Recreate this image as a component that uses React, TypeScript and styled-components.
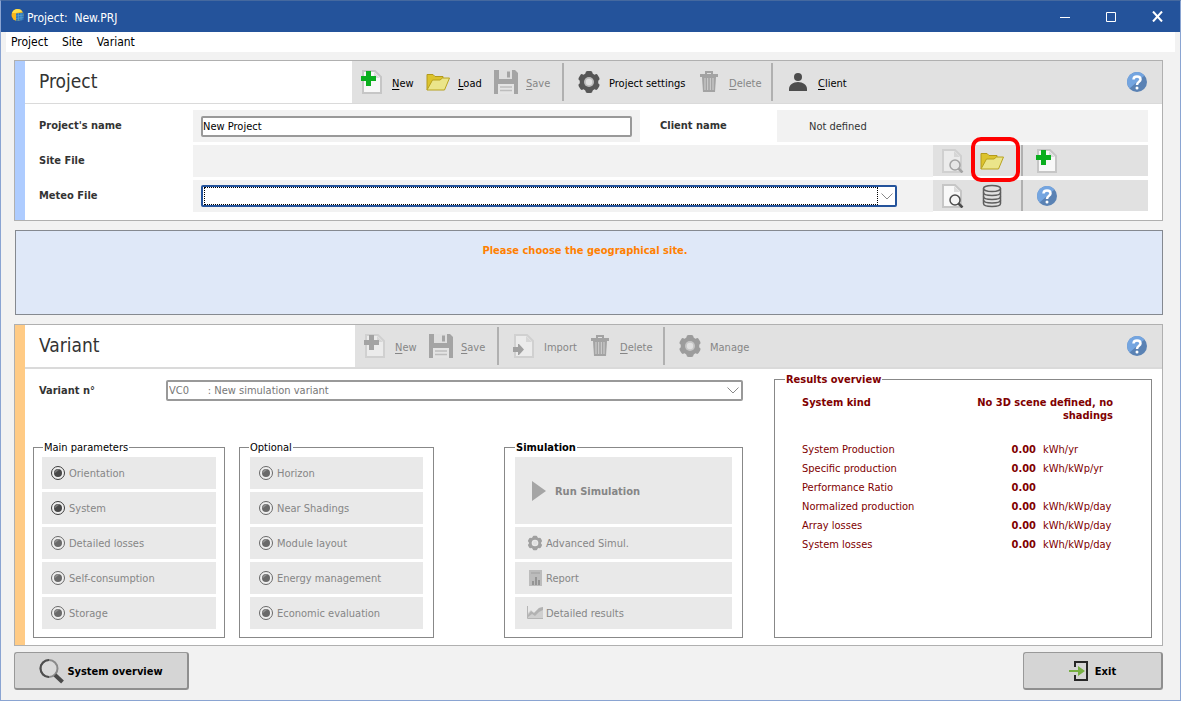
import React from "react";
import styled, { createGlobalStyle, css } from "styled-components";

const FONT = `"DejaVu Sans Condensed", "DejaVu Sans", sans-serif`;

const c = {
  blue: "#24539b",
  body: "#f2f2f2",
  bar: "#e1e1e1",
  line: "#b0b0b0",
  field: "#999999",
  text: "#333333",
  disabled: "#868686",
  maroon: "#800000",
};

const GlobalStyle = createGlobalStyle`
  *, *::before, *::after { box-sizing: border-box; }
  body { margin: 0; font-family: ${FONT}; font-size: 11px; line-height: 14px; color: ${c.text}; }
  button, input, select { font: inherit; color: inherit; margin: 0; }
  button { border: 0; background: none; padding: 0; text-align: left; white-space: nowrap; }
  svg { display: block; flex: none; }
`;

/* ---------- window ---------- */

const Window = styled.div`
  display: flex;
  flex-direction: column;
  min-height: 100vh;
  background: ${c.body};
  border: 1px solid #8aa4d2;
  border-top-color: #45699f;
`;

const TitleBar = styled.header`
  display: flex;
  align-items: center;
  height: 31px;
  padding-left: 9px;
  background: ${c.blue};
  color: #ffffff;
`;

const WindowTitle = styled.h1`
  flex: 1;
  margin: 0 0 0 2px;
  padding-top: 2px;
  font-size: 12px;
  font-weight: 400;
  white-space: pre;
`;

const CaptionButton = styled.button`
  display: flex;
  align-items: center;
  justify-content: center;
  width: 46px;
  height: 31px;
`;

const MenuBar = styled.nav`
  display: flex;
  align-items: center;
  gap: 14px;
  height: 20px;
  margin: 0 5px;
  padding-left: 5px;
  background: #ffffff;
  color: #000000;
  font-size: 12px;
`;

const Main = styled.main`
  display: flex;
  flex-direction: column;
  flex: 1;
  gap: 9px;
  padding: 8px 17px 6px 13px;
`;

/* ---------- panels ---------- */

const Panel = styled.section<{ $stripe: string }>`
  border: 1px solid ${c.line};
  background: linear-gradient(to right, ${(p) => p.$stripe} 10px, #ffffff 10px);
  padding-left: 10px;
`;

const PanelHead = styled.div<{ $rule: number }>`
  display: flex;
  height: ${(p) => 42 + p.$rule}px;
  border-bottom: ${(p) => p.$rule}px solid #dadada;
`;

const PanelTitle = styled.h2<{ $width: number }>`
  flex: none;
  width: ${(p) => p.$width}px;
  margin: 0;
  padding-left: 14px;
  font-size: 19px;
  font-weight: 400;
  line-height: 41px;
`;

const Toolbar = styled.div`
  display: flex;
  flex: 1;
  padding: 2px 15px 2px 8px;
  background: ${c.bar};
`;

const ToolButton = styled.button<{ $width?: number }>`
  display: flex;
  align-items: center;
  gap: 8px;
  width: ${(p) => (p.$width ? `${p.$width}px` : "auto")};
  color: #000000;
  &:disabled { color: ${c.disabled}; }
`;

const ToolLabel = styled.span`
  padding-top: 3px;
`;

const Separator = styled.span`
  flex: none;
  width: 2px;
  margin-right: 13px;
  background: ${c.line};
`;

const HelpButton = styled.button`
  display: flex;
  align-items: center;
  margin-left: auto;
`;

const Key = styled.span`
  text-decoration: underline;
  text-underline-offset: 2px;
`;

/* ---------- project form ---------- */

const Rows = styled.div`
  display: flex;
  flex-direction: column;
  gap: 3px;
  padding: 6px 14px 8px 14px;
`;

const Row = styled.div`
  display: flex;
  height: 32px;
`;

const FieldLabel = styled.label<{ $width: number }>`
  flex: none;
  width: ${(p) => p.$width}px;
  font-weight: 700;
  line-height: 32px;
`;

const Cell = styled.div<{ $grow: number }>`
  display: flex;
  align-items: center;
  flex: ${(p) => p.$grow} 1 ${(p) => p.$grow}px;
  min-width: 0;
  padding: 0 8px;
  background: ${c.body};
`;

const ClientLabel = styled(FieldLabel)`
  margin-left: 20px;
`;

const ClientValue = styled.output`
  padding: 2px 0 0 24px;
`;

const TextInput = styled.input`
  flex: 1;
  min-width: 0;
  height: 21px;
  padding: 0;
  border: 2px solid ${c.field};
  border-radius: 2px;
  background: #ffffff;
  color: #000000;
`;

const SelectFrame = styled.div<{ $focused?: boolean }>`
  display: flex;
  align-items: center;
  flex: 1;
  min-width: 0;
  height: ${(p) => (p.$focused ? 22 : 21)}px;
  border: 2px solid ${(p) => (p.$focused ? c.blue : c.field)};
  border-radius: 2px;
  background: #ffffff;
  padding-right: 2px;
`;

const Select = styled.select<{ $focused?: boolean }>`
  appearance: none;
  flex: 1;
  min-width: 0;
  height: 18px;
  margin-right: 3px;
  padding: 0 1px;
  border: 0;
  border-radius: 0;
  background: transparent;
  outline: none;
  white-space: pre;
  &:disabled { color: #777777; opacity: 1; }
  ${(p) => p.$focused && css`border: 1px dotted #000000; margin-left: 1px;`}
`;

const SelectCell = styled(Cell)`
  padding-right: 36px;
`;

const RowTools = styled.div`
  display: flex;
  align-items: center;
  flex: none;
  width: 215px;
  height: 31px;
  padding-left: 7px;
  background: ${c.bar};
`;

const IconButton = styled.button`
  position: relative;
  display: flex;
  align-items: center;
  justify-content: center;
  width: 24px;
  height: 31px;
  margin-right: 16px;
`;

const RowSeparator = styled.span`
  width: 2px;
  height: 31px;
  margin: 0 12px 0 1px;
  background: ${c.line};
`;

const Highlight = styled.span`
  position: absolute;
  z-index: 1;
  inset: -8px -16px -6px -9px;
  border: 4px solid #ff0000;
  border-radius: 10px;
`;

const Message = styled.p`
  height: 85px;
  margin: 0 0 0 1px;
  padding: 13px 8px 0 0;
  border: 1px solid #858990;
  background: #dfe8f8;
  color: #ff8000;
  font-weight: 700;
  text-align: center;
`;

/* ---------- variant ---------- */

const VariantBody = styled.div`
  display: flex;
  gap: 31px;
  padding: 3px 10px 7px 8px;
`;

const VariantLeft = styled.div`
  display: flex;
  flex-direction: column;
  flex: 710 1 710px;
  min-width: 0;
  gap: 39px;
  padding-top: 8px;
`;

const VariantRow = styled.div`
  display: flex;
  align-items: center;
  height: 21px;
  padding-left: 6px;
`;

const Groups = styled.div`
  display: flex;
  gap: 14px;
`;

const Group = styled.fieldset<{ $grow: number; $space?: number; $strong?: boolean; $color?: string }>`
  flex: ${(p) => p.$grow} 1 ${(p) => p.$grow}px;
  min-width: 0;
  margin: 0 0 0 ${(p) => p.$space ?? 0}px;
  padding: 0;
  border: 1px solid #888888;
  color: ${(p) => p.$color ?? "#000000"};
  legend {
    margin-left: ${(p) => (p.$strong ? 10 : 9)}px;
    padding: 2px 1px 0;
    line-height: 12px;
    font-weight: ${(p) => (p.$strong ? 700 : 400)};
  }
`;

const Stack = styled.div<{ $pad: number }>`
  display: flex;
  flex-direction: column;
  gap: 3px;
  padding: 3px ${(p) => p.$pad}px 8px;
`;

const StepButton = styled.button<{ $indent?: number; $large?: boolean }>`
  display: flex;
  align-items: center;
  gap: ${(p) => (p.$large ? 8 : 3)}px;
  height: ${(p) => (p.$large ? 67 : 32)}px;
  padding-left: ${(p) => p.$indent ?? 8}px;
  background: #e9e9e9;
  font-weight: ${(p) => (p.$large ? 700 : 400)};
  &:disabled { color: ${c.disabled}; }
`;

const ButtonText = styled.span`
  padding-top: 2px;
`;

const Results = styled.div`
  padding: 10px 0 0 27px;
`;

const KindRow = styled.div`
  display: flex;
  justify-content: space-between;
  height: 44px;
  padding-right: 38px;
  font-weight: 700;
  line-height: 13px;
`;

const KindValue = styled.span`
  width: 145px;
  text-align: right;
`;

const ResultTable = styled.table`
  width: 100%;
  border-collapse: collapse;
  th, td { height: 19px; padding: 0; text-align: left; font-weight: 400; }
  td:nth-child(2) { width: 60px; text-align: right; font-weight: 700; }
  td:nth-child(3) { width: 115px; padding-left: 7px; }
`;

/* ---------- footer ---------- */

const Footer = styled.footer`
  display: flex;
  justify-content: space-between;
  padding: 0 17px 10px 13px;
`;

const PushButton = styled.button<{ $width: number; $gap: number }>`
  display: flex;
  align-items: center;
  justify-content: center;
  gap: ${(p) => p.$gap}px;
  width: ${(p) => p.$width}px;
  height: 38px;
  border: 1px solid #999999;
  border-right: 2px solid #8f8f8f;
  border-bottom: 2px solid #8f8f8f;
  border-radius: 3px;
  background: #d5d5d5;
  color: #000000;
  font-weight: 700;
`;

/* ---------- icons ---------- */

const PageShape = ({ dim }: { dim?: boolean }) => (
  <>
    <path d="M3 1H15L21 7V23H3Z" fill={dim ? "#ebebeb" : "#f8f8f8"} stroke={dim ? "#d0d0d0" : "#c6c6c6"} strokeWidth="2" />
    <path d="M14 2V8H20Z" fill={dim ? "#d6d6d6" : "#dcdcdc"} />
  </>
);

const NewIcon = ({ dim }: { dim?: boolean }) => (
  <svg width="24" height="24" viewBox="0 0 24 24">
    <PageShape dim={dim} />
    <path d="M6 1H11V6H16V11H11V16H6V11H1V6H6Z" fill={dim ? "#a3a3a3" : "#0aae1e"} />
  </svg>
);

const ImportIcon = () => (
  <svg width="24" height="24" viewBox="0 0 24 24">
    <PageShape dim />
    <path d="M1 13H6V10H7L12 15.500L7 21H6V18H1Z" fill="#a0a0a0" />
  </svg>
);

const SearchPageIcon = ({ dim }: { dim?: boolean }) => (
  <svg width="24" height="24" viewBox="0 0 24 24">
    <PageShape dim={dim} />
    <circle cx="15" cy="16" r="5" fill={dim ? "#e6e6e6" : "#f4f4f4"} stroke={dim ? "#a3a3a3" : "#4c4c4c"} strokeWidth="1.500" />
    <path d="M18.500 19.500L22.500 23.500" stroke={dim ? "#a3a3a3" : "#4c4c4c"} strokeWidth="2.500" />
  </svg>
);

const FolderIcon = () => (
  <svg width="24" height="18" viewBox="0 0 24 18">
    <path d="M1 17V1.500H7L9 3.500H17V7" fill="#dcc32d" stroke="#b39a1c" />
    <path d="M1 17L6.500 7H14L16.500 5H23.500L18.500 17Z" fill="#ebe58a" stroke="#b8a21f" />
  </svg>
);

const SaveIcon = () => (
  <svg width="24" height="24" viewBox="0 0 24 24">
    <path d="M0 0H21L24 3V24H0Z" fill="#a4a4a4" />
    <path d="M5 0H18V9H5Z" fill="#dedede" />
    <path d="M13 1.500H16V7.500H13Z" fill="#a4a4a4" />
    <path d="M4 14H20V24H4Z" fill="#e4e4e4" />
    <path d="M6 17H18M6 20.500H18" stroke="#bdbdbd" strokeWidth="1.500" />
  </svg>
);

const GearIcon = ({ color, size = 24, hole = "#bdbdbd" }: { color: string; size?: number; hole?: string }) => (
  <svg width={size} height={size} viewBox="0 0 24 24">
    {[0, 60, 120].map((a) => (
      <rect key={a} x="8.500" y="1" width="7" height="22" rx="2" fill={color} transform={`rotate(${a} 12 12)`} />
    ))}
    <circle cx="12" cy="12" r="9.300" fill={color} />
    <circle cx="12" cy="12" r="5" fill={hole} />
    <circle cx="12" cy="12" r="3.200" fill="#e0e0e0" />
  </svg>
);

const TrashIcon = () => (
  <svg width="24" height="24" viewBox="0 0 24 24">
    <path d="M9 4V2H15V4" fill="none" stroke="#a3a3a3" strokeWidth="2" />
    <path d="M3 4H21V7H3Z" fill="#a3a3a3" />
    <path d="M5 7H19L18 22H6Z" fill="#a3a3a3" />
    <path d="M8 8V20M10.700 8V20M13.300 8V20M16 8V20" stroke="#d2d2d2" />
  </svg>
);

const PersonIcon = () => (
  <svg width="24" height="24" viewBox="0 0 24 24">
    <circle cx="12" cy="7" r="4" fill="#4d4d4d" />
    <path d="M3 21V19C3 15 7 12 12 12S21 15 21 19V21Z" fill="#4d4d4d" />
  </svg>
);

const HelpIcon = () => (
  <svg width="20" height="20" viewBox="0 0 20 20">
    <circle cx="10" cy="10" r="10" fill="#5a82b4" />
    <path d="M0 10A10 10 0 0 1 17.500 3.500L2.500 16.500A10 10 0 0 1 0 10Z" fill="#74a5e0" />
    <path d="M6.500 7.500C6.500 3.500 13.500 3.500 13.500 7.500C13.500 10 10 9.500 10 13" fill="none" stroke="#ffffff" strokeWidth="2.500" />
    <circle cx="10" cy="16" r="1.500" fill="#ffffff" />
  </svg>
);

const DatabaseIcon = () => (
  <svg width="20" height="24" viewBox="0 0 20 24" fill="none" stroke="#5e5e5e" strokeWidth="1.500">
    <ellipse cx="10" cy="4.500" rx="8.500" ry="3" />
    <path d="M1.500 4.500V19.500C1.500 23.500 18.500 23.500 18.500 19.500V4.500" />
    <path d="M1.500 8.500C1.500 12.500 18.500 12.500 18.500 8.500M1.500 12.500C1.500 16.500 18.500 16.500 18.500 12.500M1.500 16C1.500 20 18.500 20 18.500 16" />
  </svg>
);

const ChevronIcon = () => (
  <svg width="12" height="7" viewBox="0 0 12 7">
    <path d="M0.500 0.500L6 6L11.500 0.500" fill="none" stroke="#888888" />
  </svg>
);

const LampIcon = ({ dark }: { dark?: boolean }) => (
  <svg width="16" height="16" viewBox="0 0 16 16">
    <circle cx="8" cy="8" r="6.500" fill="#efefef" stroke={dark ? "#3c3c3c" : "#686868"} />
    <circle cx="8" cy="8" r="4" fill={dark ? "#484848" : "#6a6a6a"} />
    <path d="M4.500 8.500A3.700 3.700 0 0 1 9.500 4.500Z" fill={dark ? "#7a7a7a" : "#8e8e8e"} />
  </svg>
);

const PlayIcon = () => (
  <svg width="16" height="20" viewBox="0 0 16 20">
    <path d="M1 0L15 10L1 20Z" fill="#a5a5a5" />
  </svg>
);

const ReportIcon = () => (
  <svg width="16" height="16" viewBox="0 0 16 16">
    <path d="M2 0H15V16H2Z" fill="#bcbcbc" />
    <path d="M4 3H13" stroke="#a0a0a0" />
    <path d="M5 11H7V15H5ZM8 7H10V15H8ZM11 10H13V15H11Z" fill="#949494" />
  </svg>
);

const ChartIcon = () => (
  <svg width="16" height="14" viewBox="0 0 16 14">
    <path d="M1 7L4 4L7 7L12 2L16 1V12H1Z" fill="#cfcfcf" />
    <path d="M1 9L4 5L7 7L12 2L16 1V4L12 6L8 10L5 8L1 11Z" fill="#b2b2b2" />
    <path d="M0.500 0V12.500H16" fill="none" stroke="#b5b5b5" />
  </svg>
);

const MagnifierIcon = () => (
  <svg width="26" height="26" viewBox="0 0 26 26">
    <circle cx="10" cy="10.500" r="8.500" fill="#dadada" stroke="#8a8a8a" strokeWidth="2" />
    <path d="M10 2A8.500 8.500 0 0 0 10 19" fill="none" stroke="#4e4e4e" strokeWidth="2" />
    <path d="M16 17L23.500 24" stroke="#4a4a4a" strokeWidth="4" />
  </svg>
);

const ExitIcon = () => (
  <svg width="20" height="20" viewBox="0 0 20 20">
    <path d="M6 6V1H18V19H6V14" fill="none" stroke="#262626" strokeWidth="2" />
    <path d="M0 9H9V5L16 10L9 15V11H0Z" fill="#77b043" />
  </svg>
);

const AppIcon = () => (
  <svg width="15" height="18" viewBox="0 0 15 18">
    <circle cx="7.500" cy="7" r="6" fill="#f9b81c" />
    <path d="M2 5A6 6 0 0 1 12.500 3.500L6 5Z" fill="#ffe14a" />
    <path d="M6 5.500L13.500 4.500V12L6 13Z" fill="#2f78b7" />
    <path d="M8.500 5V12.500M11 5V12.500M6 8L13.500 7M6 10.500L13.500 9.500" stroke="#62a8d8" strokeWidth="0.600" />
  </svg>
);

/* ---------- data ---------- */

const mainSteps = [
  { label: "Orientation", dark: true },
  { label: "System", dark: true },
  { label: "Detailed losses" },
  { label: "Self-consumption" },
  { label: "Storage" },
];

const optionalSteps = ["Horizon", "Near Shadings", "Module layout", "Energy management", "Economic evaluation"];

const results = [
  ["System Production", "0.00", "kWh/yr"],
  ["Specific production", "0.00", "kWh/kWp/yr"],
  ["Performance Ratio", "0.00", ""],
  ["Normalized production", "0.00", "kWh/kWp/day"],
  ["Array losses", "0.00", "kWh/kWp/day"],
  ["System losses", "0.00", "kWh/kWp/day"],
];

type ToolProps = { icon: React.ReactNode; label: string; hotkey?: boolean; width?: number; disabled?: boolean };

const Tool = ({ icon, label, hotkey, width, disabled }: ToolProps) => (
  <ToolButton type="button" $width={width} disabled={disabled}>
    {icon}
    <ToolLabel>
      {hotkey ? <><Key>{label[0]}</Key>{label.slice(1)}</> : label}
    </ToolLabel>
  </ToolButton>
);

type StepProps = { icon: React.ReactNode; label: string; indent?: number; large?: boolean };

const Step = ({ icon, label, indent, large }: StepProps) => (
  <StepButton type="button" $indent={indent} $large={large} disabled>
    {icon}
    <ButtonText>{label}</ButtonText>
  </StepButton>
);

export default function App() {
  return (
    <Window>
      <GlobalStyle />
      <TitleBar>
        <AppIcon />
        <WindowTitle>{"Project:  New.PRJ"}</WindowTitle>
        <CaptionButton type="button" aria-label="Minimize">
          <svg width="10" height="10"><path d="M0 5.500H10" stroke="#ffffff" /></svg>
        </CaptionButton>
        <CaptionButton type="button" aria-label="Maximize">
          <svg width="10" height="10"><path d="M0.500 0.500H9.500V9.500H0.500Z" fill="none" stroke="#ffffff" /></svg>
        </CaptionButton>
        <CaptionButton type="button" aria-label="Close">
          <svg width="11" height="11"><path d="M1 0.500L10 10.500M10 0.500L1 10.500" stroke="#ffffff" strokeWidth="2" /></svg>
        </CaptionButton>
      </TitleBar>
      <MenuBar>
        <button type="button">Project</button>
        <button type="button">Site</button>
        <button type="button">Variant</button>
      </MenuBar>

      <Main>
        <Panel $stripe="#aeccff">
          <PanelHead $rule={1}>
            <PanelTitle $width={327}>Project</PanelTitle>
            <Toolbar>
              <Tool icon={<NewIcon />} label="New" hotkey width={66} />
              <Tool icon={<FolderIcon />} label="Load" hotkey width={68} />
              <Tool icon={<SaveIcon />} label="Save" hotkey width={68} disabled />
              <Separator />
              <Tool icon={<GearIcon color="#575757" />} label="Project settings" width={120} />
              <Tool icon={<TrashIcon />} label="Delete" hotkey width={74} disabled />
              <Separator />
              <Tool icon={<PersonIcon />} label="Client" hotkey />
              <HelpButton type="button" aria-label="Help"><HelpIcon /></HelpButton>
            </Toolbar>
          </PanelHead>
          <Rows>
            <Row>
              <FieldLabel $width={154} htmlFor="project-name">Project's name</FieldLabel>
              <Cell $grow={447}>
                <TextInput id="project-name" type="text" defaultValue="New Project" />
              </Cell>
              <ClientLabel $width={117} htmlFor="client-name">Client name</ClientLabel>
              <Cell $grow={371}>
                <ClientValue id="client-name">Not defined</ClientValue>
              </Cell>
            </Row>
            <Row>
              <FieldLabel as="span" $width={154}>Site File</FieldLabel>
              <Cell $grow={1} />
              <RowTools>
                <IconButton type="button" aria-label="View site" disabled><SearchPageIcon dim /></IconButton>
                <IconButton type="button" aria-label="Open site"><FolderIcon /><Highlight /></IconButton>
                <RowSeparator />
                <IconButton type="button" aria-label="New site"><NewIcon /></IconButton>
              </RowTools>
            </Row>
            <Row>
              <FieldLabel $width={154} htmlFor="meteo-file">Meteo File</FieldLabel>
              <SelectCell $grow={1}>
                <SelectFrame $focused>
                  <Select id="meteo-file" $focused><option value="" /></Select>
                  <ChevronIcon />
                </SelectFrame>
              </SelectCell>
              <RowTools>
                <IconButton type="button" aria-label="View meteo file"><SearchPageIcon /></IconButton>
                <IconButton type="button" aria-label="Meteo database"><DatabaseIcon /></IconButton>
                <RowSeparator />
                <IconButton type="button" aria-label="Meteo help"><HelpIcon /></IconButton>
              </RowTools>
            </Row>
          </Rows>
        </Panel>

        <Message>Please choose the geographical site.</Message>

        <Panel $stripe="#ffcb85">
          <PanelHead $rule={2}>
            <PanelTitle $width={330}>Variant</PanelTitle>
            <Toolbar>
              <Tool icon={<NewIcon dim />} label="New" hotkey width={66} disabled />
              <Tool icon={<SaveIcon />} label="Save" hotkey width={68} disabled />
              <Separator />
              <Tool icon={<ImportIcon />} label="Import" width={76} disabled />
              <Tool icon={<TrashIcon />} label="Delete" hotkey width={75} disabled />
              <Separator />
              <Tool icon={<GearIcon color="#9c9c9c" hole="#c6c6c6" />} label="Manage" disabled />
              <HelpButton type="button" aria-label="Help"><HelpIcon /></HelpButton>
            </Toolbar>
          </PanelHead>
          <VariantBody>
            <VariantLeft>
              <VariantRow>
                <FieldLabel $width={127} htmlFor="variant">Variant n°</FieldLabel>
                <SelectFrame>
                  <Select id="variant" disabled>
                    <option>{"VC0\u00a0\u00a0\u00a0\u00a0\u00a0\u00a0: New simulation variant"}</option>
                  </Select>
                  <ChevronIcon />
                </SelectFrame>
              </VariantRow>
              <Groups>
                <Group $grow={192}>
                  <legend>Main parameters</legend>
                  <Stack $pad={8}>
                    {mainSteps.map((s) => (
                      <Step key={s.label} icon={<LampIcon dark={s.dark} />} label={s.label} />
                    ))}
                  </Stack>
                </Group>
                <Group $grow={195}>
                  <legend>Optional</legend>
                  <Stack $pad={10}>
                    {optionalSteps.map((s) => (
                      <Step key={s} icon={<LampIcon />} label={s} />
                    ))}
                  </Stack>
                </Group>
                <Group $grow={239} $space={56} $strong>
                  <legend>Simulation</legend>
                  <Stack $pad={10}>
                    <Step large indent={16} icon={<PlayIcon />} label="Run Simulation" />
                    <Step indent={12} icon={<GearIcon color="#a0a0a0" size={16} hole="#e9e9e9" />} label="Advanced Simul." />
                    <Step indent={12} icon={<ReportIcon />} label="Report" />
                    <Step indent={12} icon={<ChartIcon />} label="Detailed results" />
                  </Stack>
                </Group>
              </Groups>
            </VariantLeft>
            <Group $grow={378} $strong $color={c.maroon}>
              <legend>Results overview</legend>
              <Results>
                <KindRow>
                  <span>System kind</span>
                  <KindValue>No 3D scene defined, no shadings</KindValue>
                </KindRow>
                <ResultTable>
                  <tbody>
                    {results.map(([name, value, unit]) => (
                      <tr key={name}>
                        <th scope="row">{name}</th>
                        <td>{value}</td>
                        <td>{unit}</td>
                      </tr>
                    ))}
                  </tbody>
                </ResultTable>
              </Results>
            </Group>
          </VariantBody>
        </Panel>
      </Main>

      <Footer>
        <PushButton type="button" $width={175} $gap={2}><MagnifierIcon /><ButtonText>System overview</ButtonText></PushButton>
        <PushButton type="button" $width={140} $gap={6}><ExitIcon /><ButtonText>Exit</ButtonText></PushButton>
      </Footer>
    </Window>
  );
}
